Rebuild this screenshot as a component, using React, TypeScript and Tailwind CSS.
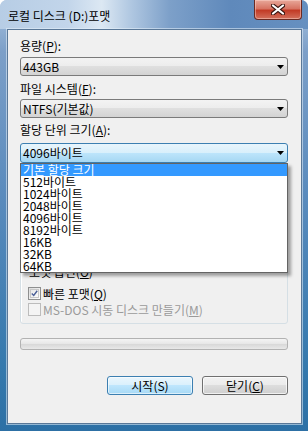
import React from "react";

const FONT = "font-['Noto_Sans_CJK_KR','Liberation_Sans',sans-serif]";

function Arrow() {
  return (
    <svg width="7" height="4" viewBox="0 0 7 4" className="shrink-0">
      <path d="M0 0H7L3.5 4Z" fill="#000" />
    </svg>
  );
}

function Combo({ children, focused }: { children: React.ReactNode; focused?: boolean }) {
  return (
    <div
      className={
        focused
          ? "h-[20px] w-[268px] rounded-[3px] border border-[#3c7fb1] bg-[linear-gradient(180deg,#e8f5fc_0%,#d8effb_50%,#bde5fb_50%,#a6d7f3_100%)] flex items-center justify-between pl-[2px] pr-[3px] text-[12px] leading-[14px] text-black"
          : "h-[19px] w-[268px] rounded-[3px] border border-[#7a7a7a] bg-[linear-gradient(180deg,#f3f3f3_0%,#ececec_50%,#dfdfdf_50%,#d3d3d3_100%)] flex items-center justify-between pl-[2px] pr-[3px] text-[12px] leading-[14px] text-black"
      }
    >
      <span>{children}</span>
      <Arrow />
    </div>
  );
}

function Label({ children, cls }: { children: React.ReactNode; cls: string }) {
  return <div className={"h-[13px] text-[12px] leading-[13px] text-black " + cls}>{children}</div>;
}

const items = [
  "기본 할당 크기",
  "512바이트",
  "1024바이트",
  "2048바이트",
  "4096바이트",
  "8192바이트",
  "16KB",
  "32KB",
  "64KB",
];

export default function App() {
  return (
    <div
      className={
        "w-[308px] h-[431px] flex flex-col rounded-t-[7px] overflow-hidden bg-[linear-gradient(180deg,#a9c3df_0%,#7c9fc8_12%,#5a8bbd_45%,#3579ad_85%,#2d70a5_100%)] " +
        FONT
      }
    >
      {/* Title bar */}
      <div className="h-[29px] shrink-0 flex items-start justify-between bg-[linear-gradient(90deg,#b7cde5_0%,#c2d5ea_22%,#dce8f3_33%,#b2c9e2_42%,#7da0c9_55%,#5f89bb_75%,#6690c0_100%)]">
        <div className="pl-[8px] pt-[9px] text-[12px] leading-[14px] text-black">로컬 디스크 (D:)포맷</div>
        <div className="mr-[6px] w-[48px] h-[20px] rounded-b-[4px] border border-t-0 border-[#6b2a22] bg-[linear-gradient(180deg,#e8a89a_0%,#d77463_45%,#c23b26_55%,#d3705c_100%)] flex items-center justify-center shadow-[inset_0_0_0_1px_rgba(255,220,210,0.45)]">
          <svg width="14" height="11" viewBox="0 0 14 11">
            <path d="M2 1.5L12 9.5M12 1.5L2 9.5" stroke="#3a1510" strokeWidth="4.2" strokeLinecap="round" />
            <path d="M2 1.5L12 9.5M12 1.5L2 9.5" stroke="#ffffff" strokeWidth="2.2" strokeLinecap="round" />
          </svg>
        </div>
      </div>

      {/* Client area */}
      <div className="ml-[7px] mr-[6px] mb-[7px] h-[395px] border border-[#5a7898] bg-[#f0f0f0] pl-[12px] pr-[13px] pt-[9px] flex flex-col shadow-[0_0_0_1px_rgba(230,240,250,0.55)]">
        <Label cls="">
          용량(<span className="underline">P</span>):
        </Label>
        <div className="mt-[5px]">
          <Combo>443GB</Combo>
        </div>
        <Label cls="mt-[6px]">
          파일 시스템(<span className="underline">F</span>):
        </Label>
        <div className="mt-[4px]">
          <Combo>NTFS(기본값)</Combo>
        </div>
        <Label cls="mt-[5px]">
          할당 단위 크기(<span className="underline">A</span>):
        </Label>
        <div className="mt-[7px] relative z-10">
          <Combo focused>4096바이트</Combo>
          {/* dropdown list */}
          <div className="absolute left-0 top-full w-[268px] border border-[#646464] bg-white shadow-[3px_3px_3px_rgba(0,0,0,0.35)]">
            {items.map((it, i) => (
              <div
                key={it}
                className={
                  i === 0
                    ? "h-[12px] pl-[2px] text-[12px] leading-[12px] bg-[#3399ff] text-white"
                    : "h-[12px] pl-[2px] text-[12px] leading-[12px] text-black"
                }
              >
                {it}
              </div>
            ))}
          </div>
        </div>

        {/* Group box (its top is hidden under the open list) */}
        <div className="mt-[108px] relative w-[268px] h-[53px] rounded-[3px] border border-[#d5dfe5] shadow-[inset_1px_1px_0_#ffffff] pl-[7px] pt-[15px] flex flex-col gap-[3px]">
          <div className="absolute left-[6px] -top-[7px] px-[2px] bg-[#f0f0f0] text-[12px] leading-[13px] text-black">
            포맷 옵션(<span className="underline">O</span>)
          </div>
          <div className="flex items-center h-[13px] gap-[2px]">
            <div className="w-[13px] h-[13px] border border-[#8e8f8f] bg-[linear-gradient(135deg,#dcdcdc_0%,#ffffff_100%)] flex items-center justify-center p-[1px]">
              <div className="w-full h-full border border-[#c8c8c8] bg-[linear-gradient(135deg,#e8e8e8,#fbfbfb)] flex items-center justify-center">
                <svg width="9" height="9" viewBox="0 0 9 9">
                  <path d="M1 4.5L3.5 7L8 1" stroke="#4a5f97" strokeWidth="1.8" fill="none" />
                </svg>
              </div>
            </div>
            <span className="text-[12px] leading-[13px] text-black">
              빠른 포맷(<span className="underline">Q</span>)
            </span>
          </div>
          <div className="flex items-center h-[13px] gap-[2px]">
            <div className="w-[13px] h-[13px] border border-[#bcbcbc] bg-[#f4f4f4]" />
            <span className="text-[12px] leading-[13px] text-[#9a9a9a]">
              MS-DOS 시동 디스크 만들기(<span className="underline">M</span>)
            </span>
          </div>
        </div>

        {/* progress bar */}
        <div className="mt-[14px] w-[268px] h-[12px] rounded-[3px] border border-[#b2b2b2] bg-[linear-gradient(180deg,#f4f4f4_0%,#e6e6e6_50%,#d9d9d9_55%,#e8e8e8_100%)]" />

        {/* buttons */}
        <div className="mt-[26px] w-[268px] flex justify-end gap-[9px]">
          <div className="w-[86px] h-[19px] rounded-[3px] border border-[#3c7fb1] bg-[linear-gradient(180deg,#eaf6fd_0%,#d9f0fc_50%,#bee6fd_50%,#a7d9f5_100%)] shadow-[inset_0_0_0_1px_rgba(255,255,255,0.6)] flex items-center justify-center text-[12px] leading-[14px] text-black">
            시작(S)
          </div>
          <div className="w-[86px] h-[19px] rounded-[3px] border border-[#707070] bg-[linear-gradient(180deg,#f2f2f2_0%,#ebebeb_50%,#dddddd_50%,#cfcfcf_100%)] shadow-[inset_0_0_0_1px_rgba(255,255,255,0.7)] flex items-center justify-center text-[12px] leading-[14px] text-black">
            닫기(<span className="underline">C</span>)
          </div>
        </div>
      </div>
    </div>
  );
}
